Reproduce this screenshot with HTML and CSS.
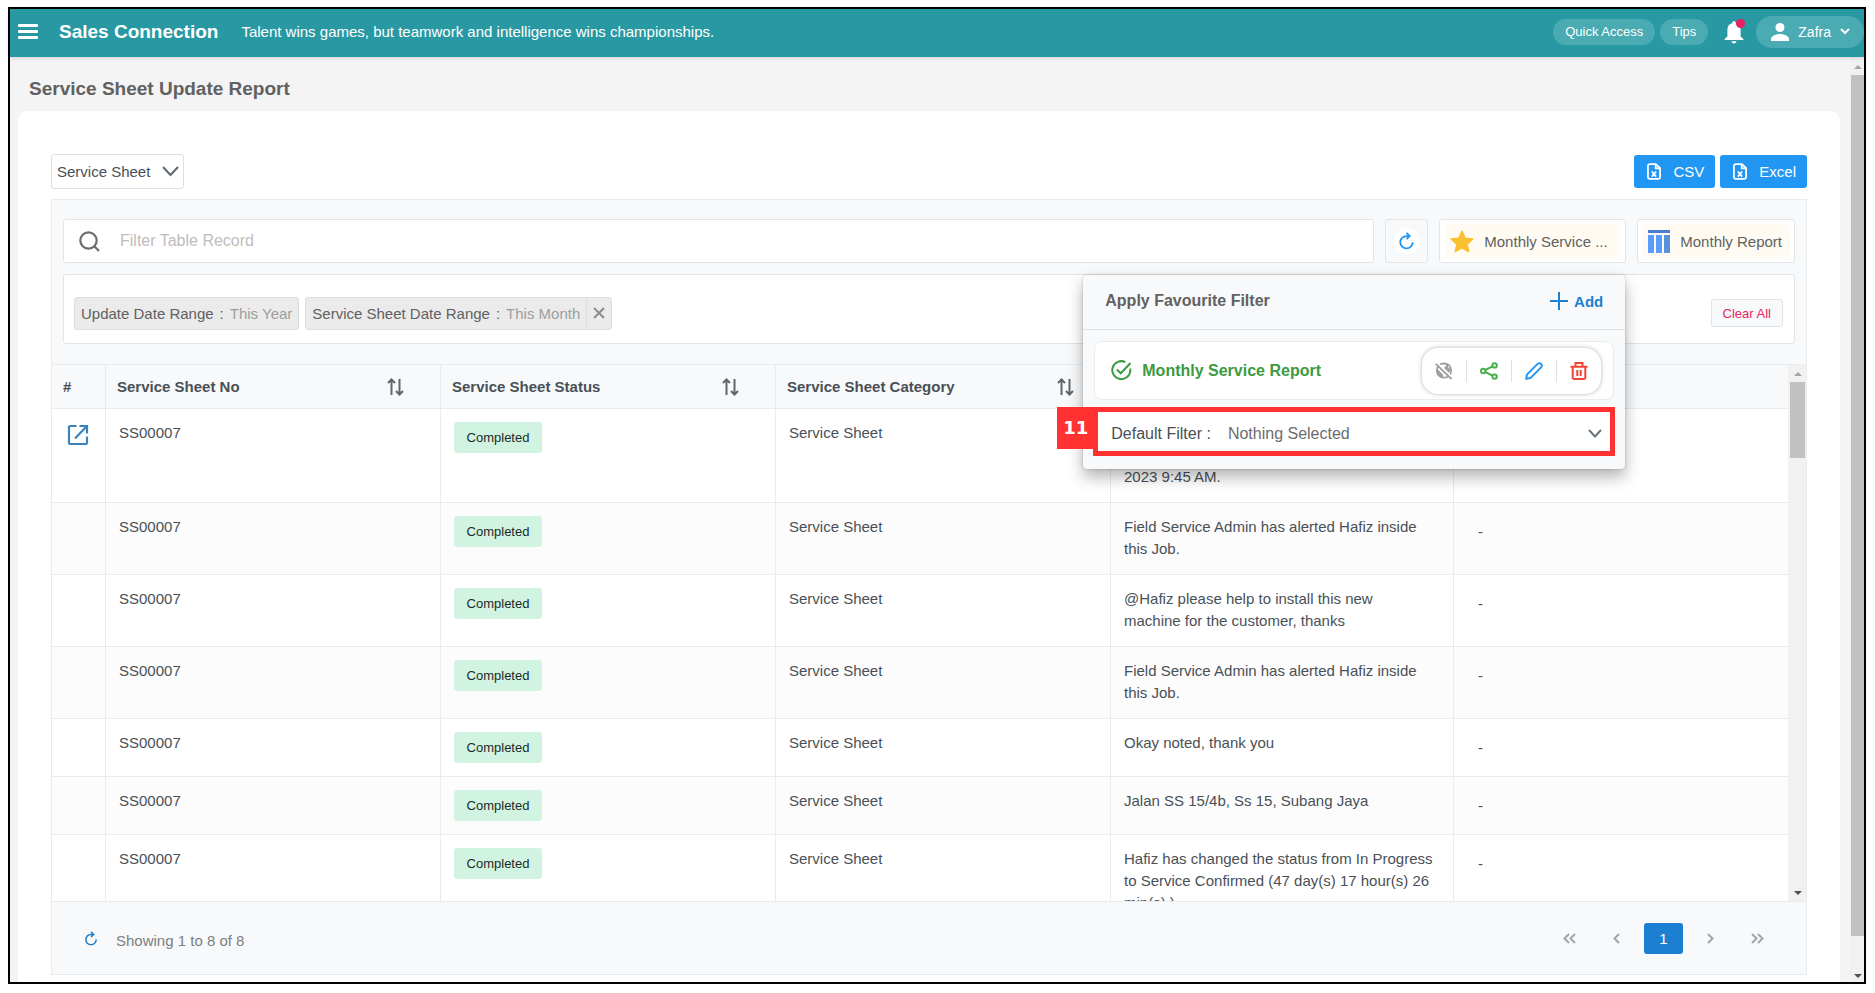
FILE: index.html
```html
<!DOCTYPE html>
<html lang="en">
<head>
  <meta charset="UTF-8" />
  <meta name="viewport" content="width=device-width, initial-scale=1.0"/>
  <title>Service Sheet Update Report</title>
  <link rel="stylesheet" href="styles.css">
</head>
<body>
  <div class="window">
    <header class="topbar">
      <button class="menu-btn" aria-label="Menu"><span></span><span></span><span></span></button>
      <strong class="brand">Sales Connection</strong>
      <span class="tagline">Talent wins games, but teamwork and intelligence wins championships.</span>
      <div class="top-actions">
        <button class="pill">Quick Access</button>
        <button class="pill">Tips</button>
        <button class="bell" aria-label="Notifications">
          <svg width="22" height="24" viewBox="0 0 22 24" fill="#fff"><path d="M11 1c1 0 1.700.8 1.700 1.900 3 .8 4.900 3.300 4.900 6.500v7l2.800 2.600v1.100H1.600V19l2.800-2.600v-7c0-3.200 1.900-5.700 4.900-6.500C9.300 1.800 10 1 11 1z"/><path d="M8.600 21.300h4.800c0 1.300-1 2.200-2.400 2.200s-2.400-.9-2.400-2.200z"/></svg>
          <span class="bell-dot"></span>
        </button>
        <button class="pill user">
          <svg width="18" height="18" viewBox="0 0 18 18" fill="#fff"><circle cx="9" cy="4.500" r="4.500"/><path d="M0 18v-2.300C0 12.700 6 11 9 11s9 1.700 9 4.700V18z"/></svg>
          Zafra
          <svg width="10" height="7" viewBox="0 0 10 7" fill="none" stroke="#fff" stroke-width="2"><path d="M1 1l4 4 4-4"/></svg>
        </button>
      </div>
    </header>

    <div class="content">
      <main class="page">
        <h1>Service Sheet Update Report</h1>

        <section class="card">
          <div class="card-top">
            <div class="select-wrap">
              <select class="type-select" aria-label="Report type"><option>Service Sheet</option></select>
              <svg width="17" height="11" viewBox="0 0 17 11" fill="none" stroke="#5f666d" stroke-width="2"><path d="M1 1l7.500 8L16 1"/></svg>
            </div>
            <div class="exports">
              <button class="export">
                <svg width="14" height="17" viewBox="0 0 15 18" fill="none" stroke="#fff" stroke-width="1.900"><path d="M3 1h6.500L14 5.500V15a2 2 0 0 1-2 2H3a2 2 0 0 1-2-2V3a2 2 0 0 1 2-2z"/><path d="M9.300 1v4.700H14M5.200 9l4.600 5.500M9.800 9l-4.600 5.500"/></svg>
                CSV
              </button>
              <button class="export">
                <svg width="14" height="17" viewBox="0 0 15 18" fill="none" stroke="#fff" stroke-width="1.900"><path d="M3 1h6.500L14 5.500V15a2 2 0 0 1-2 2H3a2 2 0 0 1-2-2V3a2 2 0 0 1 2-2z"/><path d="M9.300 1v4.700H14M5.200 9l4.600 5.500M9.800 9l-4.600 5.500"/></svg>
                Excel
              </button>
            </div>
          </div>

          <div class="report">
            <div class="filters">
              <div class="toolbar">
                <label class="search">
                  <svg width="21" height="21" viewBox="0 0 21 21" fill="none" stroke="#6c6c6c" stroke-width="2.200"><circle cx="9.500" cy="9.500" r="8.200"/><path d="M14.800 14.800L20 20"/></svg>
                  <input type="text" placeholder="Filter Table Record" aria-label="Filter Table Record">
                </label>
                <button class="tool refresh" aria-label="Refresh">
                  <span><svg width="15" height="18" viewBox="0 0 16 20" fill="none" stroke="#2196f3" stroke-width="2"><path d="M11 4.500H8A6.900 6.900 0 1 0 14.900 11.400M8 1l3.600 3.500L8 8"/></svg></span>
                </button>
                <div class="favourite">
                  <button class="tool">
                    <span class="tint">
                      <svg width="24" height="23" viewBox="0 0 24 23" fill="#fbc02d" stroke="#fbc02d" stroke-width="1.500" stroke-linejoin="round"><path d="M12 1.200l3.200 7 7.600.8-5.700 5.100 1.600 7.500L12 17.800l-6.700 3.800 1.600-7.500L1.200 9l7.600-.8z"/></svg>
                      Monthly Service ...
                    </span>
                  </button>

                  <div class="popup">
                    <div class="popup-head">
                      <h2>Apply Favourite Filter</h2>
                      <button class="add">
                        <svg width="18" height="18" viewBox="0 0 18 18" stroke="#1c7fd1" stroke-width="2"><path d="M9 0v18M0 9h18"/></svg>
                        Add
                      </button>
                    </div>
                    <div class="popup-body">
                      <div class="fav-item">
                        <svg width="21" height="21" viewBox="0 0 21 21" fill="none" stroke="#3d9a41" stroke-width="2"><path d="M19.300 8.500v1.800a9 9 0 1 1-5-8.200"/><path d="M5.800 9.500l4 3.800L19.500 3"/></svg>
                        <span class="fav-name">Monthly Service Report</span>
                        <div class="fav-actions">
                          <button aria-label="Make public">
                            <svg width="18" height="18" viewBox="0 0 18 18"><circle cx="9" cy="8.500" r="7.200" fill="#fff" stroke="#9e9e9e" stroke-width="1.800"/><path d="M1.800 6.500l6.200 6v3.500C4 15.500 1.500 12 1.800 6.500zM6.500 2.200L11 2v2L9 6l5 5 1.500-3.500L13 5V2.500z" fill="#9e9e9e"/><path d="M1.500 .5l16 15.500" stroke="#fff" stroke-width="2"/><path d="M.8 1.800L16.500 17" stroke="#9e9e9e" stroke-width="1.800"/></svg>
                          </button>
                          <button aria-label="Share">
                            <svg width="18" height="18" viewBox="0 0 18 18" fill="none" stroke="#4caf50" stroke-width="2"><circle cx="3.200" cy="9" r="2.200"/><circle cx="14.600" cy="3.400" r="2.200"/><circle cx="14.600" cy="14.600" r="2.200"/><path d="M5.200 8l7.400-3.600M5.200 10l7.400 3.600"/></svg>
                          </button>
                          <button aria-label="Edit">
                            <svg width="18" height="18" viewBox="0 0 18 18" fill="none" stroke="#2196f3" stroke-width="2" stroke-linejoin="round"><path d="M1.200 16.800l.7-4.200L12.600 1.900a2.400 2.400 0 0 1 3.500 3.500L5.400 16.100z"/></svg>
                          </button>
                          <button aria-label="Delete">
                            <svg width="18" height="18" viewBox="0 0 18 18" fill="none" stroke="#f44336" stroke-width="2"><path d="M.5 4.700h17M5.500 4.500V1h7v3.500M2.700 5v10.500a1.500 1.500 0 0 0 1.500 1.500h9.600a1.500 1.500 0 0 0 1.500-1.500V5M7.300 8v6M10.700 8v6"/></svg>
                          </button>
                        </div>
                      </div>
                      <div class="default-filter">
                        <span class="step">11</span>
                        <label for="defaultFilter">Default Filter :</label>
                        <select id="defaultFilter"><option>Nothing Selected</option></select>
                        <svg width="14" height="9" viewBox="0 0 14 9" fill="none" stroke="#6c757d" stroke-width="2"><path d="M1 1l6 6.500L13 1"/></svg>
                      </div>
                    </div>
                  </div>
                </div>
                <button class="tool">
                  <span class="tint">
                    <svg width="22" height="23" viewBox="0 0 22 23"><path d="M0 0h22v3H0z" fill="#4a7fd0"/><path d="M0 5h6v18H0zM8 5h6v18H8z" fill="#5c9dfb"/><path d="M16 5h6v18h-6z" fill="#5a8fdc"/></svg>
                    Monthly Report
                  </span>
                </button>
              </div>

              <div class="applied">
                <span class="chip"><span>Update Date Range</span> <span>:</span> <em>This Year</em></span>
                <span class="chip closable"><span>Service Sheet Date Range</span> <span>:</span> <em>This Month</em>
                  <button aria-label="Remove filter"><svg width="12" height="12" viewBox="0 0 12 12" stroke="#8c8c8c" stroke-width="2"><path d="M1 1l10 10M11 1L1 11"/></svg></button>
                </span>
                <button class="clear">Clear All</button>
              </div>
            </div>

            <div class="table-area">
              <div class="table-scroll">
                <table>
                  <colgroup>
                    <col class="c-no"><col class="c-mid"><col class="c-mid"><col class="c-mid"><col class="c-wide"><col>
                  </colgroup>
                  <thead>
                    <tr>
                      <th>#</th>
                      <th><div class="th-in">Service Sheet No <svg class="sort" viewBox="0 0 17 18"><path d="M4.500 17V1.500M1 5l3.500-3.500L8 5M12.500 1v15.500M9 13l3.500 3.500L16 13"/></svg></div></th>
                      <th><div class="th-in">Service Sheet Status <svg class="sort" viewBox="0 0 17 18"><path d="M4.500 17V1.500M1 5l3.500-3.500L8 5M12.500 1v15.500M9 13l3.500 3.500L16 13"/></svg></div></th>
                      <th><div class="th-in">Service Sheet Category <svg class="sort" viewBox="0 0 17 18"><path d="M4.500 17V1.500M1 5l3.500-3.500L8 5M12.500 1v15.500M9 13l3.500 3.500L16 13"/></svg></div></th>
                      <th></th>
                      <th></th>
                    </tr>
                  </thead>
                  <tbody>
                    <tr>
                      <td class="open"><a href="#" aria-label="Open"><svg width="22" height="22" viewBox="0 0 22 22" fill="none" stroke="#3b82bd" stroke-width="2.200"><path d="M9.500 2H3a1 1 0 0 0-1 1v16a1 1 0 0 0 1 1h16a1 1 0 0 0 1-1v-6.500M12.500 2H20v7.500M20 2L8 14.500"/></svg></a></td>
                      <td>SS00007</td><td class="status"><span class="badge">Completed</span></td><td>Service Sheet</td>
                      <td><br><br>2023 9:45 AM.</td><td></td>
                    </tr>
                    <tr>
                      <td></td><td>SS00007</td><td class="status"><span class="badge">Completed</span></td><td>Service Sheet</td>
                      <td>Field Service Admin has alerted Hafiz inside this Job.</td><td class="dash">-</td>
                    </tr>
                    <tr>
                      <td></td><td>SS00007</td><td class="status"><span class="badge">Completed</span></td><td>Service Sheet</td>
                      <td>@Hafiz please help to install this new<br>machine for the customer, thanks</td><td class="dash">-</td>
                    </tr>
                    <tr>
                      <td></td><td>SS00007</td><td class="status"><span class="badge">Completed</span></td><td>Service Sheet</td>
                      <td>Field Service Admin has alerted Hafiz inside this Job.</td><td class="dash">-</td>
                    </tr>
                    <tr>
                      <td></td><td>SS00007</td><td class="status"><span class="badge">Completed</span></td><td>Service Sheet</td>
                      <td>Okay noted, thank you</td><td class="dash">-</td>
                    </tr>
                    <tr>
                      <td></td><td>SS00007</td><td class="status"><span class="badge">Completed</span></td><td>Service Sheet</td>
                      <td>Jalan SS 15/4b, Ss 15, Subang Jaya</td><td class="dash">-</td>
                    </tr>
                    <tr>
                      <td></td><td>SS00007</td><td class="status"><span class="badge">Completed</span></td><td>Service Sheet</td>
                      <td>Hafiz has changed the status from In Progress to Service Confirmed (47 day(s) 17 hour(s) 26 min(s) )</td><td class="dash">-</td>
                    </tr>
                  </tbody>
                </table>
              </div>
              <div class="scrollbar table-bar" aria-hidden="true">
                <i class="up"></i><i class="thumb"></i><i class="down"></i>
              </div>
            </div>

            <footer class="table-foot">
              <button class="reload" aria-label="Reload"><svg width="12" height="15" viewBox="0 0 16 20" fill="none" stroke="#1c7fd1" stroke-width="2"><path d="M11 4.500H8A6.900 6.900 0 1 0 14.900 11.400M8 1l3.600 3.500L8 8"/></svg></button>
              <span class="showing">Showing 1 to 8 of 8</span>
              <nav class="pager">
                <button aria-label="First page"><svg width="13" height="11" viewBox="0 0 13 11"><path d="M6 1L1.500 5.500 6 10M12 1L7.500 5.500 12 10"/></svg></button>
                <button aria-label="Previous page"><svg width="7" height="11" viewBox="0 0 7 11"><path d="M6 1L1.500 5.500 6 10"/></svg></button>
                <button class="current">1</button>
                <button aria-label="Next page"><svg width="7" height="11" viewBox="0 0 7 11"><path d="M1 1l4.500 4.500L1 10"/></svg></button>
                <button aria-label="Last page"><svg width="13" height="11" viewBox="0 0 13 11"><path d="M1 1l4.500 4.500L1 10M7 1l4.500 4.500L7 10"/></svg></button>
              </nav>
            </footer>
          </div>
        </section>
      </main>
      <div class="scrollbar page-bar" aria-hidden="true">
        <i class="up"></i><i class="thumb"></i><i class="down"></i>
      </div>
    </div>
  </div>
</body>
</html>
```
FILE: styles.css
```css
* {
  box-sizing: border-box;
}
body {
  margin: 0;
  height: 100vh;
  padding: 7px 9px 9px 8px;
  background: #fff;
  color: #495057;
  font-family: "Liberation Sans", Arial, Helvetica, sans-serif;
  font-size: 15px;
}
button,
input,
select {
  font: inherit;
  color: inherit;
  margin: 0;
  padding: 0;
  border: 0;
  background: none;
}
select {
  appearance: none;
}
button {
  cursor: pointer;
}
svg {
  display: block;
  flex: none;
}

.window {
  height: 100%;
  display: flex;
  flex-direction: column;
  border: 2px solid #000;
  background: #f4f4f4;
}

/* top bar */
.topbar {
  flex: none;
  display: flex;
  align-items: center;
  height: 48px;
  padding: 0 0 3px 8px;
  background: #2899a3;
  color: #fff;
  box-shadow: 0 1px 4px rgba(0,0,0,0.15);
  z-index: 1;
}
.menu-btn {
  width: 20px;
  display: grid;
  gap: 3px;
}
.menu-btn span {
  height: 3px;
  border-radius: 1px;
  background: #fff;
}
.brand {
  margin-left: 21px;
  font-size: 19px;
}
.tagline {
  margin-left: 23px;
}
.top-actions {
  display: flex;
  align-items: center;
  margin-left: auto;
}
.pill {
  height: 26px;
  margin-right: 5px;
  padding: 0 12px;
  border-radius: 16px;
  background: #4aabb3;
  font-size: 13px;
}
.bell {
  position: relative;
  margin: 0 11px 0 10px;
}
.bell-dot {
  position: absolute;
  top: -1px;
  right: 0;
  width: 9px;
  height: 9px;
  border-radius: 50%;
  background: #e91e63;
}
.user {
  display: flex;
  align-items: center;
  gap: 9px;
  height: 32px;
  margin: 0;
  padding: 0 14px 0 15px;
  font-size: 14px;
}

.content {
  flex: 1;
  min-height: 0;
  display: flex;
}
.page {
  flex: 1;
  min-width: 0;
  display: flex;
  flex-direction: column;
  padding: 0 10px 0 8px;
}
h1 {
  margin: 0;
  padding: 21px 11px 11px;
  font-size: 19px;
  line-height: 22px;
  color: #616161;
}
.card {
  flex: 1;
  min-height: 0;
  display: flex;
  flex-direction: column;
  padding: 43px 33px 7px;
  border-radius: 10px 10px 0 0;
  background: #fff;
}
.card-top {
  display: flex;
  justify-content: space-between;
  align-items: center;
  margin-bottom: 10px;
}
.select-wrap {
  position: relative;
}
.select-wrap svg {
  position: absolute;
  top: 12px;
  right: 5px;
  pointer-events: none;
}
.type-select {
  width: 133px;
  height: 35px;
  padding: 0 5px 1px;
  border: 1px solid #dcdfe6;
  border-radius: 3px;
}
.exports {
  display: flex;
  gap: 5px;
}
.export {
  display: flex;
  align-items: center;
  gap: 12px;
  height: 33px;
  padding: 0 11px 0 13px;
  border-radius: 3px;
  background: #2196f3;
  color: #fff;
}

/* report table */
.report {
  flex: 1;
  min-height: 0;
  display: flex;
  flex-direction: column;
  border: 1px solid #e9ecef;
  background: #f8f9fa;
}
.filters {
  padding: 19px 11px 20px;
}
.toolbar {
  display: flex;
  gap: 11px;
  height: 44px;
}
.search {
  flex: 1;
  display: flex;
  align-items: center;
  gap: 20px;
  padding-left: 15px;
  border: 1px solid #e4e4e4;
  border-radius: 3px;
  background: #fff;
}
.search input {
  flex: 1;
  outline: none;
  font-size: 16px;
}
.search input::placeholder {
  color: #bdbdbd;
}
.tool {
  height: 44px;
  padding: 0 5px;
  border: 1px solid #e4e4e4;
  border-radius: 3px;
  background: #fff;
  color: #616161;
}
.tint {
  display: flex;
  align-items: center;
  gap: 10px;
  height: 34px;
  padding: 0 7px 0 5px;
  border-radius: 4px;
  background: #fffbf3;
}
.refresh {
  width: 43px;
  background: #f8f9fa;
}
.refresh span {
  display: grid;
  place-items: center;
  width: 26px;
  height: 26px;
  margin: auto;
  border-radius: 50%;
  background: #fff;
}
.favourite {
  position: relative;
}
.favourite .tool {
  width: 187px;
}
.applied {
  display: flex;
  align-items: center;
  gap: 6px;
  height: 70px;
  margin-top: 11px;
  padding: 8px 11px 0 10px;
  border: 1px solid #e4e4e4;
  border-radius: 3px;
  background: #fff;
}
.chip {
  display: flex;
  align-items: center;
  gap: 6px;
  height: 33px;
  padding: 0 6px;
  border: 1px solid #dedede;
  border-radius: 3px;
  background: #ebebeb;
  color: #616161;
}
.chip em {
  font-style: normal;
  color: #9e9e9e;
}
.closable {
  padding-right: 0;
}
.chip button {
  height: 31px;
  padding: 0 6px;
  border-left: 1px solid #dedede;
}
.clear {
  height: 28px;
  margin-left: auto;
  padding: 0 11px;
  border: 1px solid #dfe2e6;
  border-radius: 3px;
  background: #f8f9fa;
  color: #e9245f;
  font-size: 13px;
}

/* favourite filter popup */
.popup {
  position: absolute;
  top: 56px;
  right: 1px;
  z-index: 5;
  width: 542px;
  border-radius: 4px;
  background: #f8f9fb;
  box-shadow: 0 8px 16px rgba(0,0,0,0.3), 0 0 3px rgba(0,0,0,0.2);
}
.popup-head {
  display: flex;
  align-items: center;
  justify-content: space-between;
  height: 55px;
  padding: 0 22px 2px;
  border-bottom: 1px solid #dee2e6;
}
.popup-head h2 {
  margin: 0;
  font-size: 16px;
  color: #616161;
}
.add {
  display: flex;
  align-items: center;
  gap: 6px;
  font-weight: bold;
  color: #1c7fd1;
}
.popup-body {
  padding: 11px 10px 13px;
}
.fav-item {
  display: flex;
  align-items: center;
  height: 59px;
  margin: 0 1px 7px;
  padding: 0 12px 0 16px;
  border: 1px solid #e9ecef;
  border-radius: 8px;
  background: #fff;
}
.fav-name {
  margin-left: 10px;
  font-size: 16px;
  font-weight: bold;
  color: #3d9a41;
}
.fav-actions {
  display: flex;
  align-items: center;
  height: 46px;
  margin-left: auto;
  border-radius: 16px;
  background: #fff;
  box-shadow: 0 0 4px rgba(0,0,0,0.3);
}
.fav-actions button {
  padding: 2px 13px;
  border-left: 1px solid #e0e0e0;
}
.fav-actions button:first-child {
  border-left: 0;
}
.default-filter {
  position: relative;
  display: flex;
  align-items: center;
  height: 49px;
  padding: 4px 8px 0 13px;
  border: 5px solid #ff3131;
  background: #fff;
  font-size: 16px;
}
.default-filter select {
  flex: 1;
  margin-left: 17px;
  color: #6c6c6c;
}
.step {
  position: absolute;
  top: -5px;
  right: calc(100% + 4px);
  width: 37px;
  padding: 11px 0;
  background: #ff3131;
  color: #fff;
  font: bold 18px/20px "DejaVu Sans", sans-serif;
  text-align: center;
}

.table-area {
  flex: 1;
  min-height: 0;
  display: flex;
  border-top: 1px solid #e9ecef;
  border-bottom: 1px solid #e9ecef;
}
.table-scroll {
  flex: 1;
  overflow: hidden;
}
table {
  width: 100%;
  table-layout: fixed;
  border-collapse: separate;
  border-spacing: 0;
  background: #fff;
}
.c-no {
  width: 54px;
}
.c-mid {
  width: 335px;
}
.c-wide {
  width: 343px;
}
th {
  height: 44px;
  padding: 0 11px;
  border-right: 1px solid #e9ecef;
  border-bottom: 1px solid #e9ecef;
  background: #f8f9fa;
  text-align: left;
}
.th-in {
  display: flex;
  align-items: center;
  justify-content: space-between;
}
.sort {
  width: 17px;
  height: 18px;
  margin-right: 25px;
  fill: none;
  stroke: #5f666d;
  stroke-width: 2;
}
td {
  height: 58px;
  padding: 13px 13px 14px;
  border-right: 1px solid #e9ecef;
  border-bottom: 1px solid #e9ecef;
  line-height: 22px;
  vertical-align: top;
}
th:last-child,
td:last-child {
  border-right: 0;
}
tbody tr:nth-child(even) {
  background: #fcfcfc;
}
.open {
  padding: 15px;
}
.status {
  padding: 13px;
}
.badge {
  display: block;
  width: 88px;
  height: 31px;
  border-radius: 3px;
  background: #d1f4e2;
  color: #1d2b26;
  font-size: 13px;
  line-height: 31px;
  text-align: center;
}
.dash {
  padding: 18px 24px 0;
}

.table-foot {
  display: flex;
  align-items: center;
  height: 72px;
  padding: 0 29px 0 33px;
}
.showing {
  margin: 4px 0 0 19px;
  color: #7b7f83;
}
.pager {
  display: flex;
  gap: 8px;
  margin-left: auto;
}
.pager button {
  display: grid;
  place-items: center;
  width: 39px;
  height: 31px;
  border-radius: 3px;
}
.pager svg {
  fill: none;
  stroke: #a3a6a9;
  stroke-width: 2;
}
.pager .current {
  background: #1c7fd1;
  color: #fff;
}

/* scrollbars */
.scrollbar {
  flex: none;
  display: flex;
  flex-direction: column;
  align-items: center;
  background: #f1f1f1;
}
.scrollbar i {
  border: 4px solid transparent;
}
.scrollbar .up {
  border-top: 0;
  border-bottom-color: #a3a3a3;
}
.scrollbar .down {
  margin-top: auto;
  border-bottom: 0;
  border-top-color: #505050;
}
.scrollbar .thumb {
  border: 0;
  background: #c1c1c1;
}
.page-bar {
  width: 14px;
  padding: 8px 0 4px 1px;
}
.page-bar .thumb {
  flex: 0 0 calc(100% - 52px);
  width: 13px;
  margin-top: 6px;
}
.table-bar {
  width: 18px;
  padding: 7px 1px 6px 2px;
}
.table-bar .thumb {
  flex: 0 0 76px;
  width: 15px;
  margin-top: 6px;
}
```
